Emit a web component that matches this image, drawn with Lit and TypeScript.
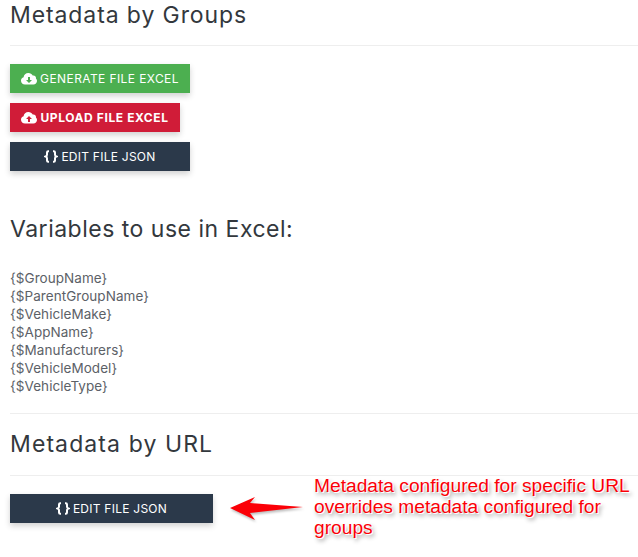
import { LitElement, html, css, svg } from 'lit';
import { customElement } from 'lit/decorators.js';

const VARIABLES = [
  '{$GroupName}',
  '{$ParentGroupName}',
  '{$VehicleMake}',
  '{$AppName}',
  '{$Manufacturers}',
  '{$VehicleModel}',
  '{$VehicleType}',
];

const cloud = (arrow: 'down' | 'up') => html`
  <svg class="icon" width="16" height="13" viewBox="0 0 16 13">
    <path fill="#fff" d="M4 12.5C1.8 12.5 0 10.9 0 8.8 0 7.2 1 5.8 2.6 5.3 2.8 2.9 4.8 1 7.4 1c1.900 0 3.500 1 4.300 2.600 .3-.1.6-.1.8-.1 1.400 0 2.500 1.100 2.500 2.400 0 .2 0 .4-.1.6C15.500 7.100 16 8 16 9c0 1.900-1.600 3.500-3.600 3.500z"/>
    ${arrow === 'down'
      ? svg`<path fill="currentColor" d="M7 5h2v3h2l-3 3-3-3h2z"/>`
      : svg`<path fill="currentColor" d="M7 11h2V8h2L8 5 5 8h2z"/>`}
  </svg>
`;

const braces = html`
  <svg class="icon" width="14" height="13" viewBox="0 0 14 13" fill="none" stroke="#fff" stroke-width="2">
    <path d="M5 1.200H4.200c-.8 0-1.200.4-1.200 1.200v2.400c0 .9-.5 1.400-1.500 1.700 1 .3 1.500.8 1.500 1.700v2.400c0 .8.4 1.200 1.200 1.200H5"/>
    <path d="M9 1.200h.8c.8 0 1.200.4 1.200 1.200v2.400c0 .9.500 1.400 1.500 1.700-1 .3-1.500.8-1.500 1.700v2.400c0 .8-.4 1.200-1.200 1.200H9"/>
  </svg>
`;

@customElement('app-root')
export class AppRoot extends LitElement {
  static styles = css`
    :host {
      display: block;
      position: relative;
      height: 557px;
      overflow: hidden;
      box-sizing: border-box;
      background: #fff;
      padding-left: 10px;
      font-family: Inter, 'Open Sans', sans-serif;
      color: #3a3f44;
    }
    h2 {
      margin: 0;
      font-size: 23px;
      font-weight: 400;
      line-height: 30px;
      letter-spacing: 0.9px;
      color: #33383d;
    }
    .title-top {
      height: 29px;
    }
    hr {
      margin: 0;
      border: 0;
      border-top: 1px solid #eeeeee;
    }
    .buttons {
      display: flex;
      flex-direction: column;
      align-items: flex-start;
      gap: 10px;
      margin-top: 18px;
    }
    .btn {
      display: flex;
      align-items: center;
      justify-content: center;
      gap: 3px;
      height: 29px;
      width: 180px;
      font-size: 12px;
      letter-spacing: 0.25px;
      color: #fff;
      box-shadow: 0 3px 6px rgba(0, 0, 0, 0.18);
    }
    .icon {
      flex: none;
    }
    .green {
      background: #4caf50;
      color: #4caf50;
      letter-spacing: 0.4px;
    }
    .green span {
      color: #fff;
    }
    .red {
      width: 170px;
      background: #d01c38;
      color: #d01c38;
      font-weight: 700;
      letter-spacing: 0.6px;
    }
    .red span {
      color: #fff;
    }
    .dark {
      background: #2b394a;
    }
    .wide {
      width: 203px;
    }
    .vars-title {
      margin-top: 43px;
      letter-spacing: 0.5px;
    }
    .vars {
      margin-top: 25px;
      font-size: 13.500px;
      line-height: 18px;
      letter-spacing: 0.05px;
      color: #5c6167;
    }
    .divider {
      margin: 18px 0 15px;
    }
    .url-title {
      letter-spacing: 1.100px;
    }
    .url-hr {
      margin-top: 16px;
    }
    .url-buttons {
      margin-top: 18px;
    }
    .note {
      position: absolute;
      left: 314px;
      top: 475px;
      width: 322px;
      font-family: 'Liberation Sans', Arial, sans-serif;
      font-size: 19.200px;
      line-height: 21px;
      color: #fb0007;
      text-shadow: 1px 1px 0 #fff, -1px -1px 0 #fff, 2px 3px 4px rgba(0, 0, 0, 0.45);
    }
    .arrow {
      position: absolute;
      left: 228px;
      top: 494px;
      filter: drop-shadow(1px 2px 1px rgba(0, 0, 0, 0.25));
    }
  `;

  render() {
    return html`
      <h2 class="title-top">Metadata by Groups</h2>
      <hr class="url-hr" />
      <div class="buttons">
        <div class="btn green">${cloud('down')}<span>GENERATE FILE EXCEL</span></div>
        <div class="btn red">${cloud('up')}<span>UPLOAD FILE EXCEL</span></div>
        <div class="btn dark">${braces}<span>EDIT FILE JSON</span></div>
      </div>
      <h2 class="vars-title">Variables to use in Excel:</h2>
      <div class="vars">
        ${VARIABLES.map((name) => html`<div>${name}</div>`)}
      </div>
      <hr class="divider" />
      <h2 class="url-title">Metadata by URL</h2>
      <hr class="url-hr" />
      <div class="buttons url-buttons">
        <div class="btn dark wide">${braces}<span>EDIT FILE JSON</span></div>
      </div>
      <svg class="arrow" width="78" height="30" viewBox="0 0 78 30">
        <path fill="#fb0007" d="M2 14 27 3 22 9 75 13 22 19 27 26z"/>
      </svg>
      <div class="note">Metadata configured for specific URL overrides metadata configured for groups</div>
    `;
  }
}
